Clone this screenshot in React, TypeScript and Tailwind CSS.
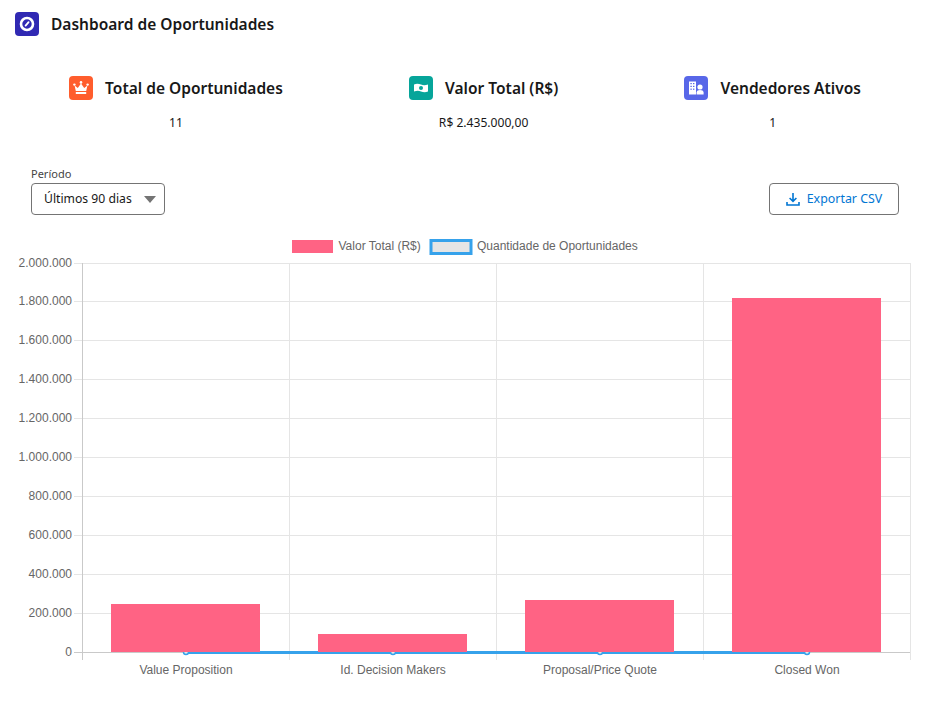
const FONT = "font-['Noto_Sans','Open_Sans',sans-serif]";

const gridYs = [263, 301, 340, 379, 418, 457, 496, 535, 574, 613, 652];
const yLabels = ['2.000.000', '1.800.000', '1.600.000', '1.400.000', '1.200.000', '1.000.000', '800.000', '600.000', '400.000', '200.000', '0'];
const gridXs = [82, 289, 496, 703, 910];
const bars = [
  { x: 111, w: 149, top: 604, label: 'Value Proposition', cx: 186 },
  { x: 318, w: 149, top: 634, label: 'Id. Decision Makers', cx: 393 },
  { x: 525, w: 149, top: 600, label: 'Proposal/Price Quote', cx: 600 },
  { x: 732, w: 149, top: 298, label: 'Closed Won', cx: 807 },
];

function HeaderIcon() {
  return (
    <div className="flex h-6 w-6 shrink-0 items-center justify-center rounded bg-[#3029b3]">
      <svg width="18" height="18" viewBox="0 0 18 18">
        <circle cx="9" cy="9" r="6" fill="none" stroke="#fff" strokeWidth="2.6" />
        <path d="M7.6 10.6 L10.6 7.2" stroke="#fff" strokeWidth="1.8" strokeLinecap="round" />
      </svg>
    </div>
  );
}

function CrownIcon() {
  return (
    <svg width="18" height="18" viewBox="0 0 18 18" fill="#fff">
      <path d="M2.6 6.6 L5.8 9 L9 4.6 L12.2 9 L15.4 6.6 L14.2 12 H3.8 Z" />
      <rect x="3.8" y="13" width="10.4" height="2" />
      <circle cx="2.4" cy="5.6" r="1.2" />
      <circle cx="9" cy="3.4" r="1.3" />
      <circle cx="15.6" cy="5.6" r="1.2" />
    </svg>
  );
}

function MoneyIcon() {
  return (
    <svg width="18" height="18" viewBox="0 0 18 18">
      <path d="M2 5.4 C5 4.2 7 4.8 9 5.6 C11 6.4 13 6.6 16 5.6 V12.6 C13 13.6 11 13.2 9 12.4 C7 11.6 5 11.4 2 12.4 Z" fill="#fff" />
      <circle cx="9" cy="9" r="2" fill="#06a59a" />
    </svg>
  );
}

function PartnerIcon() {
  return (
    <svg width="18" height="18" viewBox="0 0 18 18" fill="#fff">
      <path d="M2 2.5 H9 V15.5 H2 Z" />
      <circle cx="13" cy="8" r="2.6" />
      <path d="M9.6 15.5 V13.6 C9.6 11.8 11.2 11 13 11 C14.8 11 16.6 11.8 16.6 13.6 V15.5 Z" />
      <g fill="#5867e8">
        <rect x="3.4" y="4" width="1.4" height="1.2" />
        <rect x="6" y="4" width="1.4" height="1.2" />
        <rect x="3.4" y="6.8" width="1.4" height="1.2" />
        <rect x="6" y="6.8" width="1.4" height="1.2" />
        <rect x="3.4" y="9.6" width="1.4" height="1.2" />
        <rect x="6" y="9.6" width="1.4" height="1.2" />
      </g>
    </svg>
  );
}

function Kpi({ icon, color, title, value }: { icon: React.ReactNode; color: string; title: string; value: string }) {
  return (
    <div className="flex flex-col items-center">
      <div className="flex items-center gap-3">
        <div className={`flex h-6 w-6 items-center justify-center rounded ${color}`}>{icon}</div>
        <span className="text-[15.5px] leading-6 font-semibold text-[#181818]">{title}</span>
      </div>
      <p className="mt-[14px] text-[12.1px] leading-[18px] text-[#181818]">{value}</p>
    </div>
  );
}

function Chart() {
  return (
    <svg width="931" height="450" viewBox="0 236 931 450" className="block font-['Liberation_Sans',sans-serif]">
      {/* legenda */}
      <rect x="292" y="240" width="41" height="13" fill="#ff6384" />
      <text x="338.5" y="250" fontSize="12" fill="#666">Valor Total (R$)</text>
      <rect x="431" y="240.5" width="40" height="13" fill="#e5e5e5" stroke="#36a2eb" strokeWidth="3" />
      <text x="477" y="250" fontSize="12" fill="#666">Quantidade de Oportunidades</text>

      {/* grade */}
      {gridYs.map((y, i) => (
        <g key={y}>
          <line x1="74" x2="911" y1={y + 0.5} y2={y + 0.5} stroke={i === 10 ? '#c9c9c9' : '#e5e5e5'} />
          <text x="72" y={y + 4} textAnchor="end" fontSize="12" fill="#666">{yLabels[i]}</text>
        </g>
      ))}
      {gridXs.map((x, i) => (
        <line key={x} x1={x + 0.5} x2={x + 0.5} y1="263" y2="660" stroke={i === 0 ? '#c9c9c9' : '#e5e5e5'} />
      ))}

      {/* linha de quantidade, fica por baixo das barras */}
      <line x1="186" x2="807" y1="652.5" y2="652.5" stroke="#36a2eb" strokeWidth="3" />
      {bars.map((b) => (
        <circle key={b.label + 'p'} cx={b.cx} cy="652" r="2.5" fill="#e5e5e5" stroke="#36a2eb" strokeWidth="1.5" />
      ))}

      {/* barras */}
      {bars.map((b) => (
        <rect key={b.label} x={b.x} y={b.top} width={b.w} height={652 - b.top} fill="#ff6384" />
      ))}

      {bars.map((b) => (
        <text key={b.label + 't'} x={b.cx} y="674" textAnchor="middle" fontSize="12" fill="#666">{b.label}</text>
      ))}
    </svg>
  );
}

export default function App() {
  return (
    <div className={`h-[706px] w-[931px] overflow-hidden bg-white ${FONT}`}>
      <div className="flex items-center gap-3 pt-3 pl-[15px]">
        <HeaderIcon />
        <h1 className="text-[15.5px] leading-6 font-semibold text-[#181818]">Dashboard de Oportunidades</h1>
      </div>

      <div className="mt-10 flex justify-around pr-[7px] pl-[6px]">
        <Kpi icon={<CrownIcon />} color="bg-[#ff5d2d]" title="Total de Oportunidades" value="11" />
        <Kpi icon={<MoneyIcon />} color="bg-[#06a59a]" title="Valor Total (R$)" value="R$ 2.435.000,00" />
        <Kpi icon={<PartnerIcon />} color="bg-[#5867e8]" title="Vendedores Ativos" value="1" />
      </div>

      <div className="mt-[33px] flex items-end justify-between pr-[32px] pl-[31px]">
        <div>
          <label className="block text-[11px] leading-[18px] text-[#444]">Período</label>
          <div className="flex h-8 w-[134px] items-center justify-between rounded border border-[#747474] pr-[8px] pl-3">
            <span className="text-[12.2px] text-[#181818]">Últimos 90 dias</span>
            <svg width="12" height="7" viewBox="0 0 12 7"><path d="M0 0 H12 L6 7 Z" fill="#747474" /></svg>
          </div>
        </div>
        <button className="flex h-8 w-[130px] items-center justify-center gap-[7px] rounded border border-[#747474] text-[12.4px] text-[#0176d3]">
          <svg width="14" height="14" viewBox="0 0 14 14" fill="none" stroke="#0176d3" strokeWidth="1.6">
            <path d="M7 1 V9 M3.6 6 L7 9.4 L10.4 6" />
            <path d="M1 10 V13 H13 V10" />
          </svg>
          Exportar CSV
        </button>
      </div>

      <div className="mt-[21px]">
        <Chart />
      </div>
    </div>
  );
}
